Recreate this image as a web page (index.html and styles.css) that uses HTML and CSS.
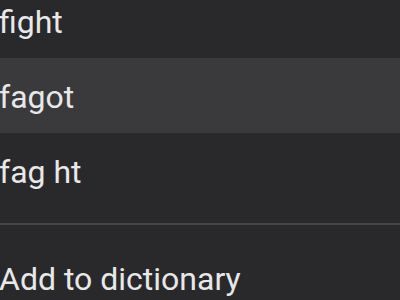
FILE: index.html
```html
<!DOCTYPE html>
<html>
<head>
<meta charset="utf-8">
<link rel="stylesheet" href="styles.css">
</head>
<body>
<div class="menu">
  <div class="item">fight</div>
  <div class="item active">fagot</div>
  <div class="item">fag ht</div>
  <div class="sep"></div>
  <div class="item">Add to dictionary</div>
</div>
</body>
</html>
```
FILE: styles.css
```css
html, body {
  margin: 0;
  padding: 0;
  background: #29292b;
  width: 400px;
  height: 300px;
  overflow: hidden;
}
.menu {
  margin-top: -17px;
  height: 317px;
  overflow: hidden;
  display: flex;
  flex-direction: column;
  font-family: Roboto, "Noto Sans", sans-serif;
  font-size: 32px;
  color: #e8e8e8;
}
.item {
  flex: none;
  height: 75px;
  line-height: 79px;
  margin-left: -1px;
  white-space: nowrap;
}
.item.active {
  background: #3a3a3c;
}
.sep {
  flex: none;
  height: 32px;
  display: flex;
  align-items: center;
}
.sep::before {
  content: "";
  flex: 1;
  height: 2px;
  background: #454547;
}
```
